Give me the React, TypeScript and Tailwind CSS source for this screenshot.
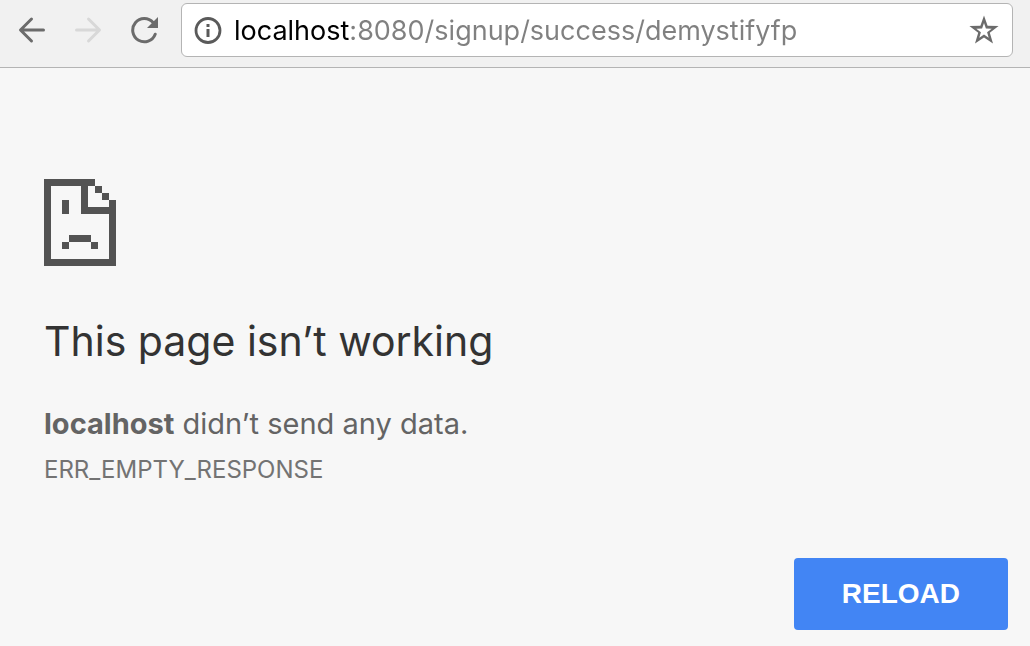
import { useState } from "react";

function BackIcon() {
  return (
    <svg width="28" height="28" viewBox="0 0 28 28" fill="none" stroke="currentColor" strokeWidth="3" strokeLinecap="round" aria-hidden="true">
      <path d="M25.5 14H3M13.5 3L2.5 14l11 11" strokeLinejoin="round" />
    </svg>
  );
}

function ForwardIcon() {
  return (
    <svg width="28" height="28" viewBox="0 0 28 28" fill="none" stroke="currentColor" strokeWidth="3" strokeLinecap="round" aria-hidden="true">
      <path d="M2.5 14H25M14.5 3l11 11-11 11" strokeLinejoin="round" />
    </svg>
  );
}

function ReloadIcon() {
  return (
    <svg width="28" height="28" viewBox="0 0 28 28" fill="none" aria-hidden="true">
      <path d="M23.1 6.6A11.6 11.6 0 1 0 25.2 18.2" stroke="currentColor" strokeWidth="3" strokeLinecap="round" />
      <path d="M28 1v11H17z" fill="currentColor" />
    </svg>
  );
}

function InfoIcon() {
  return (
    <svg width="28" height="28" viewBox="0 0 28 28" fill="none" aria-hidden="true">
      <circle cx="14" cy="14.5" r="12" stroke="currentColor" strokeWidth="2.8" />
      <path d="M12.5 8h3v3h-3zM12.5 13h3v8h-3z" fill="currentColor" />
    </svg>
  );
}

function StarIcon() {
  return (
    <svg width="30" height="30" viewBox="0 0 30 30" fill="none" aria-hidden="true">
      <path
        fillRule="evenodd"
        fill="currentColor"
        d="M15 0.5l3.6 10.3 11 0.3-8.8 6.7 3.2 10.8-9-6.2-9 6.2 3.2-10.8-8.8-6.7 11-.3zM15 8l-1.9 5.5-5.8.2 4.6 3.5-1.6 5.6 4.7-3.3 4.7 3.3-1.6-5.6 4.6-3.5-5.8-.2z"
      />
    </svg>
  );
}

function SadPageIcon() {
  return (
    <svg width="72" height="87" viewBox="0 0 72 87" fill="#535353" shapeRendering="crispEdges" role="img" aria-label="Page error">
      <path d="M0 0h51v7H44v21h28v59H0zM7 7v73h58V35H37V7z" />
      <path d="M51 7h7v7h-7zM58 14h7v7h-7zM65 21h7v14h-7z" />
      <path d="M18 21h7v14h-7zM25 56h22v7H25zM18 63h7v7h-7zM47 63h7v7h-7z" />
    </svg>
  );
}

export default function App() {
  const [url, setUrl] = useState("localhost:8080/signup/success/demystifyfp");

  return (
    <div className="flex min-h-screen flex-col bg-[#f7f7f7] font-['Inter',sans-serif]">
      <header className="flex items-center border-b border-[#b4b4b4] bg-[#f1f1f1] pt-[3px] pr-[17px] pb-[10px] pl-[18px]">
        <nav className="mr-[23px] flex gap-7 text-[#6b6b6b]" aria-label="Navigation">
          <button type="button" aria-label="Back">
            <BackIcon />
          </button>
          <button type="button" aria-label="Forward" disabled className="text-[#d8d8d8]">
            <ForwardIcon />
          </button>
          <button type="button" aria-label="Reload this page">
            <ReloadIcon />
          </button>
        </nav>
        <div className="flex h-[54px] min-w-0 flex-1 items-center rounded-[6px] border border-[#b4b4b4] bg-white pr-[13px] pl-3">
          <button type="button" aria-label="Site information" className="text-[#5a5a5a]">
            <InfoIcon />
          </button>
          <input
            type="text"
            aria-label="Address"
            spellCheck={false}
            value={url}
            onChange={(e) => setUrl(e.target.value)}
            className="ml-3 h-10 min-w-0 flex-1 bg-[linear-gradient(to_right,#000_116px,#808080_116px)] bg-clip-text pt-0.5 text-[27px] text-transparent caret-black outline-none"
          />
          <button type="button" aria-label="Bookmark this page" className="text-[#6b6b6b]">
            <StarIcon />
          </button>
        </div>
      </header>

      <main className="flex flex-1 flex-col px-11 pt-[111px] pb-4">
        <SadPageIcon />
        <h1 className="mt-12 text-[41px] leading-[54px] text-[#333]">This page isn’t working</h1>
        <p className="mt-9 text-[29px] leading-10 text-[#646464]">
          <strong className="font-bold">localhost</strong> didn’t send any data.
        </p>
        <p className="mt-2 text-[24px] leading-9 text-[#737373]">ERR_EMPTY_RESPONSE</p>
        <button
          type="button"
          className="mt-auto -mr-[22px] self-end rounded-[4px] bg-[#4285f4] px-12 py-4 font-['Liberation_Sans',Arial,sans-serif] text-[28px] leading-10 font-bold text-white"
        >
          RELOAD
        </button>
      </main>
    </div>
  );
}
